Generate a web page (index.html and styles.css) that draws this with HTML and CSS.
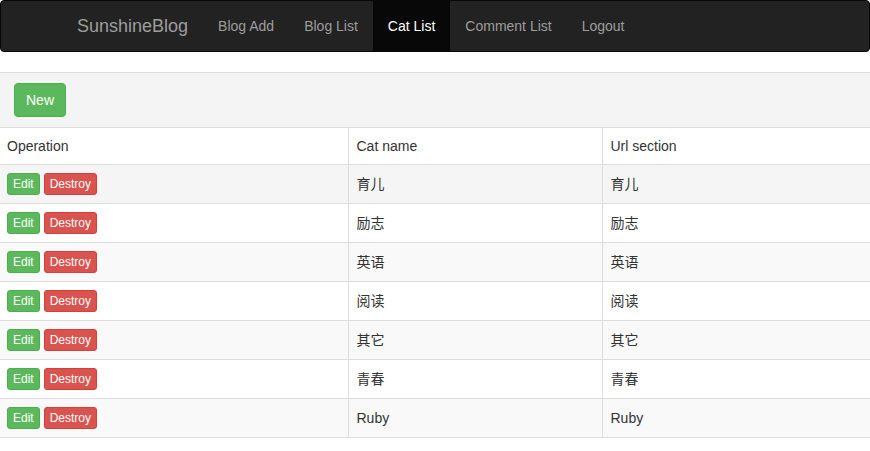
FILE: index.html
```html
<!DOCTYPE html>
<html>
<head>
<meta charset="utf-8">
<title>SunshineBlog</title>
<link rel="stylesheet" href="styles.css">
</head>
<body>
<nav class="navbar">
  <div class="container">
    <a class="brand" href="#">SunshineBlog</a>
    <ul class="nav">
      <li><a href="#">Blog Add</a></li>
      <li><a href="#">Blog List</a></li>
      <li class="active"><a href="#">Cat List</a></li>
      <li><a href="#">Comment List</a></li>
      <li><a href="#">Logout</a></li>
    </ul>
  </div>
</nav>
<div class="toolbar">
  <a class="btn btn-new" href="#">New</a>
</div>
<table class="table">
  <thead>
    <tr><th class="c1">Operation</th><th class="c2">Cat name</th><th>Url section</th></tr>
  </thead>
  <tbody>
    <tr class="hover"><td><div class="ops"><a class="btn-xs edit" href="#">Edit</a><a class="btn-xs destroy" href="#">Destroy</a></div></td><td>育儿</td><td>育儿</td></tr>
    <tr><td><div class="ops"><a class="btn-xs edit" href="#">Edit</a><a class="btn-xs destroy" href="#">Destroy</a></div></td><td>励志</td><td>励志</td></tr>
    <tr class="odd"><td><div class="ops"><a class="btn-xs edit" href="#">Edit</a><a class="btn-xs destroy" href="#">Destroy</a></div></td><td>英语</td><td>英语</td></tr>
    <tr><td><div class="ops"><a class="btn-xs edit" href="#">Edit</a><a class="btn-xs destroy" href="#">Destroy</a></div></td><td>阅读</td><td>阅读</td></tr>
    <tr class="odd"><td><div class="ops"><a class="btn-xs edit" href="#">Edit</a><a class="btn-xs destroy" href="#">Destroy</a></div></td><td>其它</td><td>其它</td></tr>
    <tr><td><div class="ops"><a class="btn-xs edit" href="#">Edit</a><a class="btn-xs destroy" href="#">Destroy</a></div></td><td>青春</td><td>青春</td></tr>
    <tr class="odd"><td><div class="ops"><a class="btn-xs edit" href="#">Edit</a><a class="btn-xs destroy" href="#">Destroy</a></div></td><td>Ruby</td><td>Ruby</td></tr>
  </tbody>
</table>
</body>
</html>
```

FILE: styles.css
```css
* { box-sizing: border-box; }
html, body { margin: 0; padding: 0; }
body {
  font-family: "Liberation Sans", Arial, "Noto Sans CJK SC", sans-serif;
  font-size: 14px;
  line-height: 20px;
  color: #333;
  background: #fff;
}
a { text-decoration: none; }

.navbar {
  background: #222;
  border: 1px solid #080808;
  border-radius: 4px;
  min-height: 52px;
  margin-bottom: 20px;
}
.container {
  width: 750px;
  margin: 0 auto;
  padding: 0 15px 0 17px;
  display: flex;
}
.brand {
  display: block;
  margin-left: -15px;
  padding: 15px;
  height: 50px;
  font-size: 18px;
  line-height: 20px;
  color: #9d9d9d;
}
.nav {
  list-style: none;
  margin: 0;
  padding: 0;
  display: flex;
}
.nav a {
  display: block;
  padding: 15px;
  line-height: 20px;
  color: #9d9d9d;
}
.nav .active a {
  background: #080808;
  color: #fff;
}

.toolbar {
  background: #f4f4f4;
  border-top: 1px solid #ddd;
  padding: 10px 14px;
  display: flex;
}
.btn {
  display: block;
  padding: 6px 11px;
  font-size: 14px;
  line-height: 20px;
  border: 1px solid #4cae4c;
  border-radius: 4px;
}
.btn-new {
  background: #5cb85c;
  color: #fff;
}

.table {
  width: 100%;
  border-collapse: collapse;
  border-spacing: 0;
}
.table th, .table td {
  padding: 8px 7px;
  text-align: left;
  font-weight: normal;
  border-top: 1px solid #ddd;
  vertical-align: middle;
  line-height: 20px;
}
.table td { height: 39px; }
.table tbody tr:last-child td { border-bottom: 1px solid #ddd; }
.table th + th, .table td + td { border-left: 1px solid #ddd; padding-left: 8px; }
.c1 { width: 348px; }
.c2 { width: 254px; }
.table tr.odd td { background: #f9f9f9; }
.table tr.hover td { background: #f5f5f5; }

.ops {
  display: flex;
  gap: 4px;
}
.btn-xs {
  display: block;
  padding: 1px 5px;
  font-size: 12px;
  line-height: 18px;
  border-radius: 3px;
  border: 1px solid;
  color: #fff;
}
.edit { background: #5cb85c; border-color: #4cae4c; }
.destroy { background: #d9534f; border-color: #d43f3a; }
```
